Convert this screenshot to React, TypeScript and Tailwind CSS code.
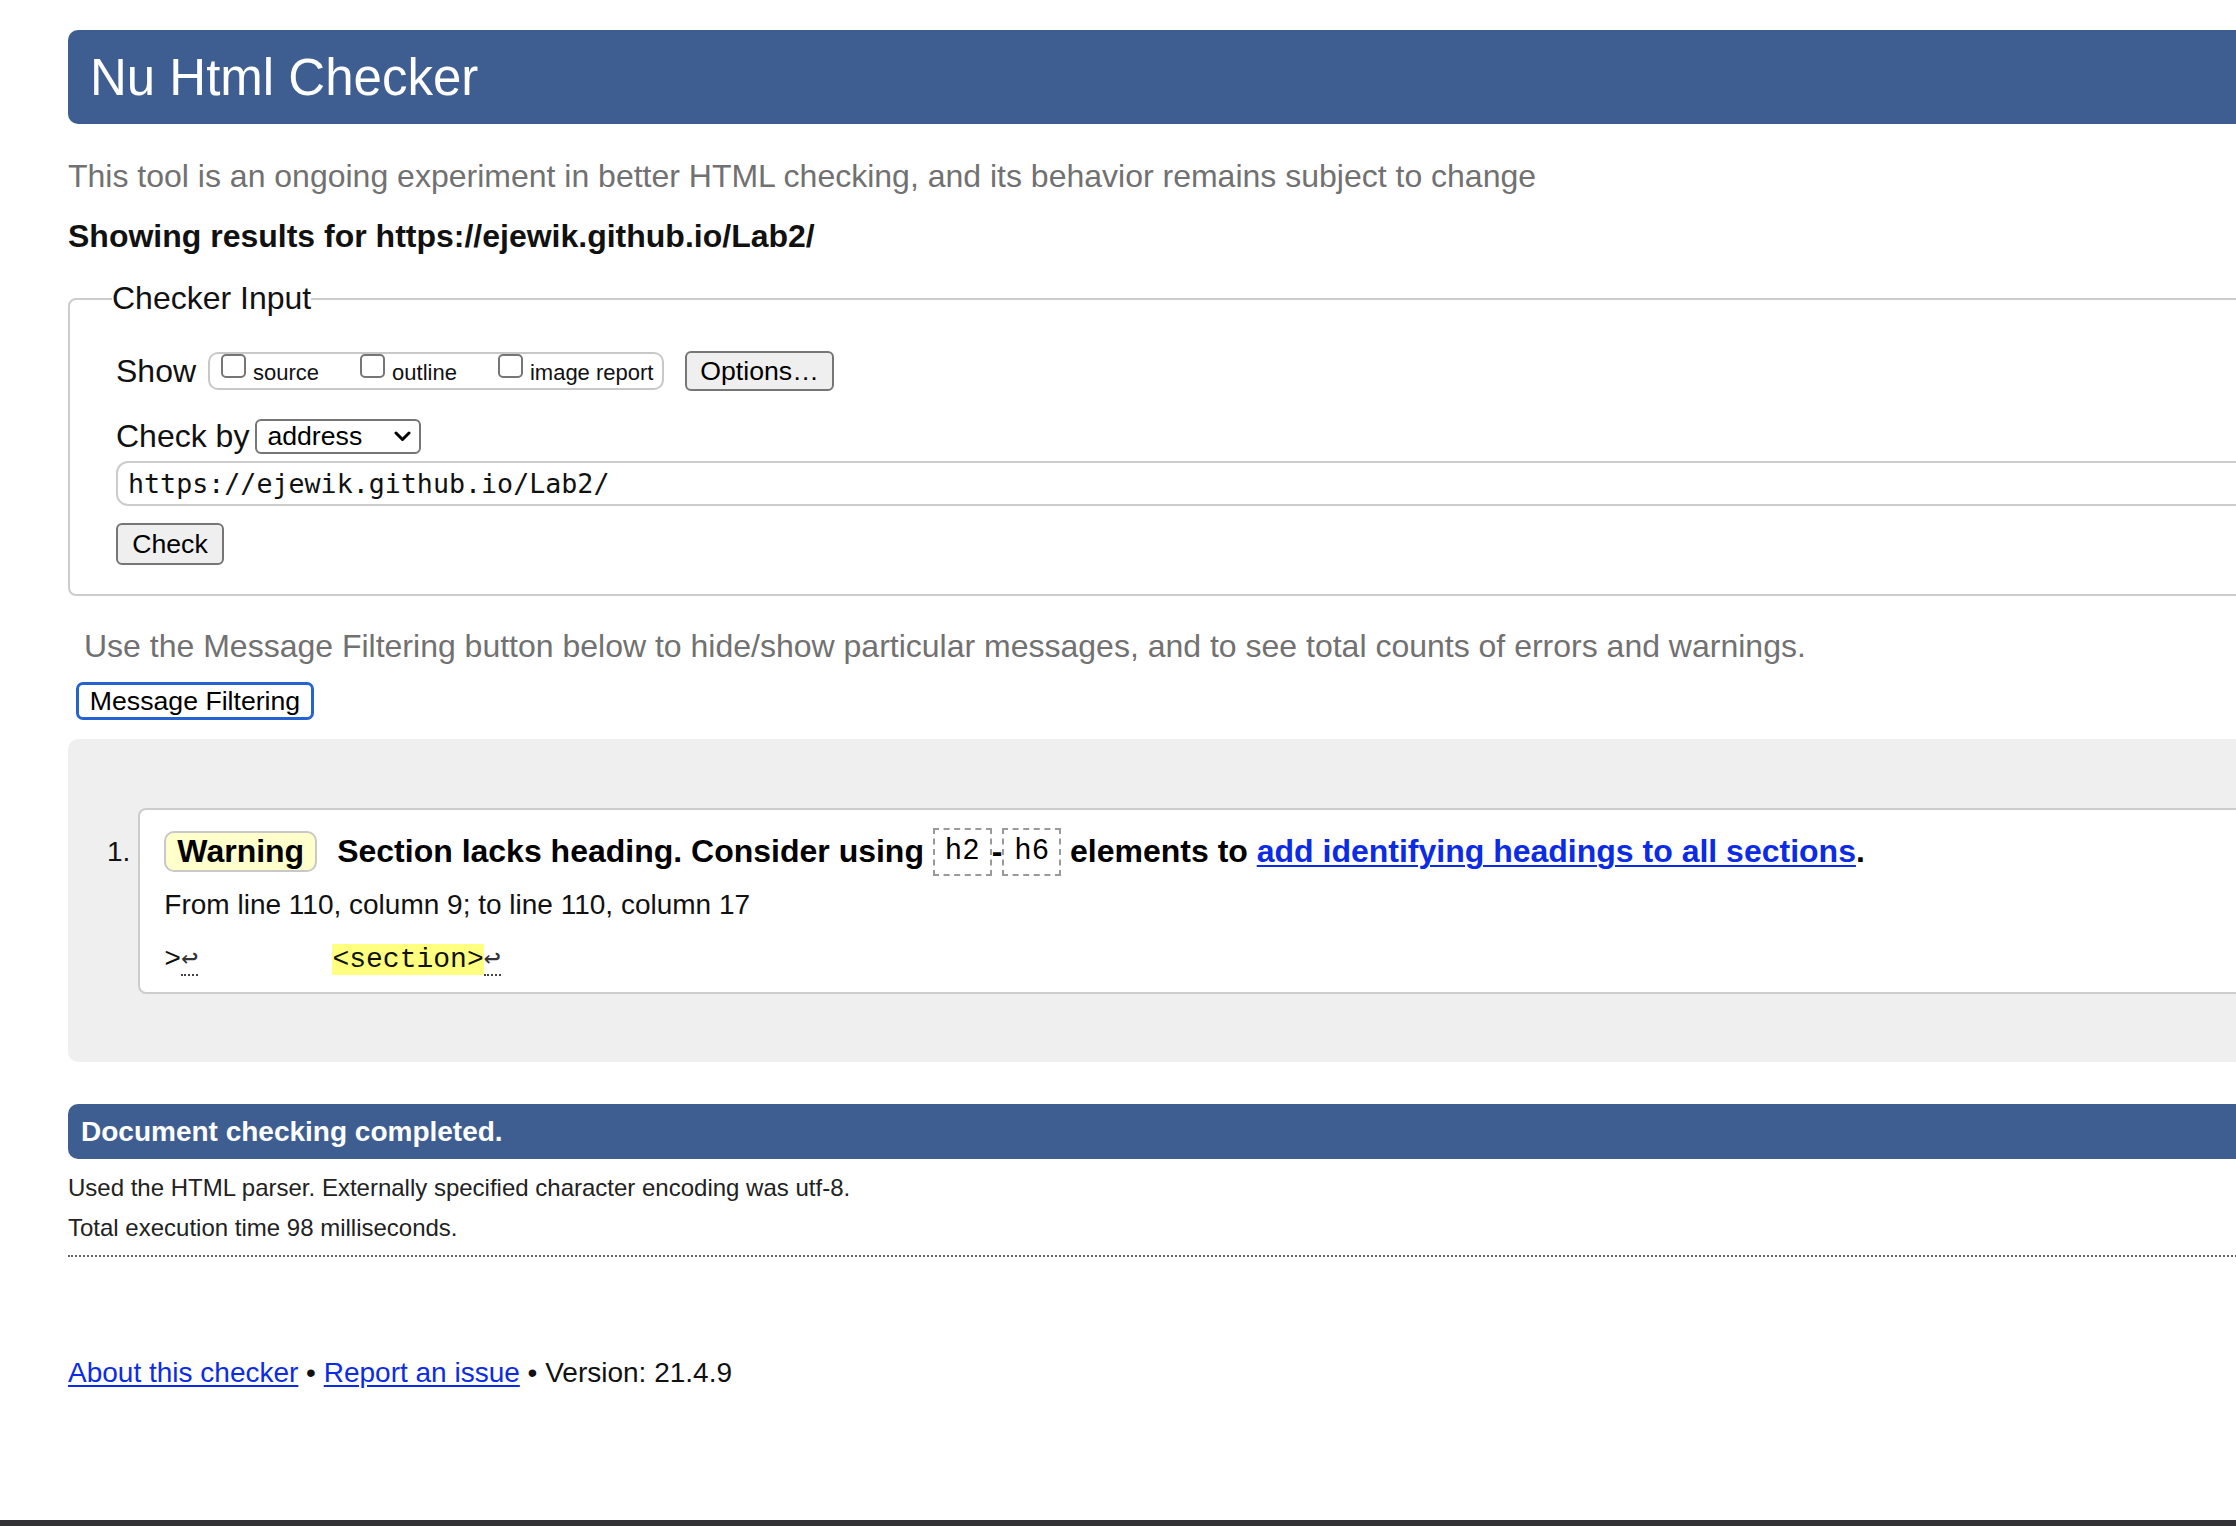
import React from 'react';

function Checkbox({ label, className = '' }: { label: string; className?: string }) {
  return (
    <div className={`flex items-start ${className}`}>
      <span className="block h-[24px] w-[25px] rounded-[5px] border-2 border-[#767676] bg-white" />
      <span className="ml-[7px] mt-[6px] text-[22px] leading-[25px] text-[#111]">{label}</span>
    </div>
  );
}

function Btn({ children, className = '' }: { children: React.ReactNode; className?: string }) {
  return (
    <div
      className={`flex items-center justify-center rounded-[6px] border-2 border-[#767676] bg-[#efefef] text-[26.67px] leading-none text-black ${className}`}
    >
      {children}
    </div>
  );
}

function Code({ children }: { children: React.ReactNode }) {
  return (
    <span className="inline-flex h-[48px] items-center border-2 border-dashed border-[#9a9a9a] px-[10px] font-['Liberation_Mono','Courier_New',monospace] text-[29px] font-normal">
      {children}
    </span>
  );
}

function Ret() {
  return <span className="border-b-2 border-dotted border-[#444] font-['DejaVu_Sans_Mono',monospace] text-[28px] text-[#333]">↩</span>;
}

export default function App() {
  return (
    <div className="flex h-[1526px] w-full flex-col overflow-hidden bg-white font-['Liberation_Sans',Arial,sans-serif] text-black">
      <div className="w-[2400px] pl-[68px] pt-[30px]">
        <h1 className="flex h-[94px] items-center rounded-l-[10px] bg-[#3e5e91] pl-[22px] text-[51px] leading-none text-white">
          Nu Html Checker
        </h1>
        <p className="mt-[34px] text-[32px] leading-[37px] text-[#717171]">
          This tool is an ongoing experiment in better HTML checking, and its behavior remains subject to change
        </p>
        <p className="mt-[23px] text-[32px] font-bold leading-[37px] text-[#111]">
          Showing results for https://ejewik.github.io/Lab2/
        </p>

        <fieldset className="mt-[25px] rounded-l-[8px] border-2 border-[#cccccc] pb-[29px] pl-[46px]">
          <legend className="-ml-[4px] text-[32px] leading-[37px] text-[#111]">Checker Input</legend>

          <div className="mt-[34px] flex h-[40px] items-center">
            <span className="text-[32px] leading-[37px] text-[#111]">Show</span>
            <div className="ml-[12px] flex h-[38px] w-[456px] items-start rounded-[10px] border-2 border-[#c8c8c8] pl-[11px]">
              <Checkbox label="source" />
              <Checkbox label="outline" className="ml-[41px]" />
              <Checkbox label="image report" className="ml-[41px]" />
            </div>
            <Btn className="ml-[21px] h-[40px] w-[149px]">Options…</Btn>
          </div>

          <div className="mt-[27px] flex h-[36px] items-center">
            <span className="text-[32px] leading-[37px] text-[#111]">Check by</span>
            <div className="ml-[6px] flex h-[35px] w-[166px] items-center justify-between rounded-[6px] border-2 border-[#767676] bg-white pl-[10px] pr-[8px] text-[26.67px] leading-none text-black">
              <span>address</span>
              <svg width="17" height="11" viewBox="0 0 17 11" fill="none">
                <path d="M2 2l6.5 6.5L15 2" stroke="#000" strokeWidth="3" strokeLinecap="round" strokeLinejoin="round" />
              </svg>
            </div>
          </div>

          <div className="mt-[7px] flex h-[45px] items-center rounded-l-[12px] border-2 border-[#cccccc] pl-[10px] font-['DejaVu_Sans_Mono',monospace] text-[26.67px] text-[#111]">
            https://ejewik.github.io/Lab2/
          </div>

          <Btn className="mt-[17px] h-[42px] w-[108px]">Check</Btn>
        </fieldset>

        <p className="mt-[32px] pl-[16px] text-[32px] leading-[37px] text-[#717171]">
          Use the Message Filtering button below to hide/show particular messages, and to see total counts of errors and warnings.
        </p>
        <div className="ml-[8px] mt-[17px] flex h-[38px] w-[238px] items-center justify-center rounded-[7px] border-[3px] border-[#2563d0] bg-white text-[26.67px] leading-none text-black">
          Message Filtering
        </div>

        <div className="mt-[19px] flex h-[323px] items-start rounded-l-[10px] bg-[#efefef] pl-[39px] pt-[69px]">
          <span className="mr-[8px] mt-[28px] text-[28px] leading-[32px] text-[#111]">1.</span>
          <div className="h-[186px] flex-1 rounded-l-[8px] border-2 border-[#cccccc] bg-white pl-[24px] pt-[17px]">
            <div className="flex h-[49px] items-center text-[32px] font-bold leading-[37px]">
              <span className="flex h-[41px] items-center rounded-[10px] border-2 border-[#c8c8c8] bg-[#ffffcc] px-[11px]">Warning</span>
              <span className="ml-[20px] flex items-center whitespace-pre">
                {'Section lacks heading. Consider using '}
                <Code>h2</Code>-<Code>h6</Code>
                {' elements to '}
                <span className="text-[#0b2be6] underline decoration-2 underline-offset-[3px]">add identifying headings to all sections</span>.
              </span>
            </div>
            <p className="mt-[13px] text-[28px] leading-[32px] text-[#111]">From line 110, column 9; to line 110, column 17</p>
            <p className="mt-[21px] whitespace-pre font-['Liberation_Mono','Courier_New',monospace] text-[28px] leading-[32px] text-[#111]">
              {'>'}
              <Ret />
              {'        '}
              <span className="bg-[#ffff80]">{'<section>'}</span>
              <Ret />
            </p>
          </div>
        </div>

        <div className="mt-[42px] flex h-[55px] items-center rounded-l-[10px] bg-[#3e5e91] pl-[13px] text-[28px] font-bold text-white">
          Document checking completed.
        </div>
        <p className="mt-[15px] text-[24px] leading-[28px] text-[#222]">
          Used the HTML parser. Externally specified character encoding was utf-8.
        </p>
        <p className="mt-[12px] text-[24px] leading-[28px] text-[#222]">Total execution time 98 milliseconds.</p>
        <div className="mt-[13px] border-t-2 border-dotted border-[#666]" />

        <p className="mt-[100px] text-[28px] leading-[32px] text-[#111]">
          <span className="text-[#0b2be6] underline underline-offset-[3px]">About this checker</span>
          {' • '}
          <span className="text-[#0b2be6] underline underline-offset-[3px]">Report an issue</span>
          {' • Version: 21.4.9'}
        </p>
      </div>
      <div className="mt-auto h-[6px] w-full bg-[#323236]" />
    </div>
  );
}
